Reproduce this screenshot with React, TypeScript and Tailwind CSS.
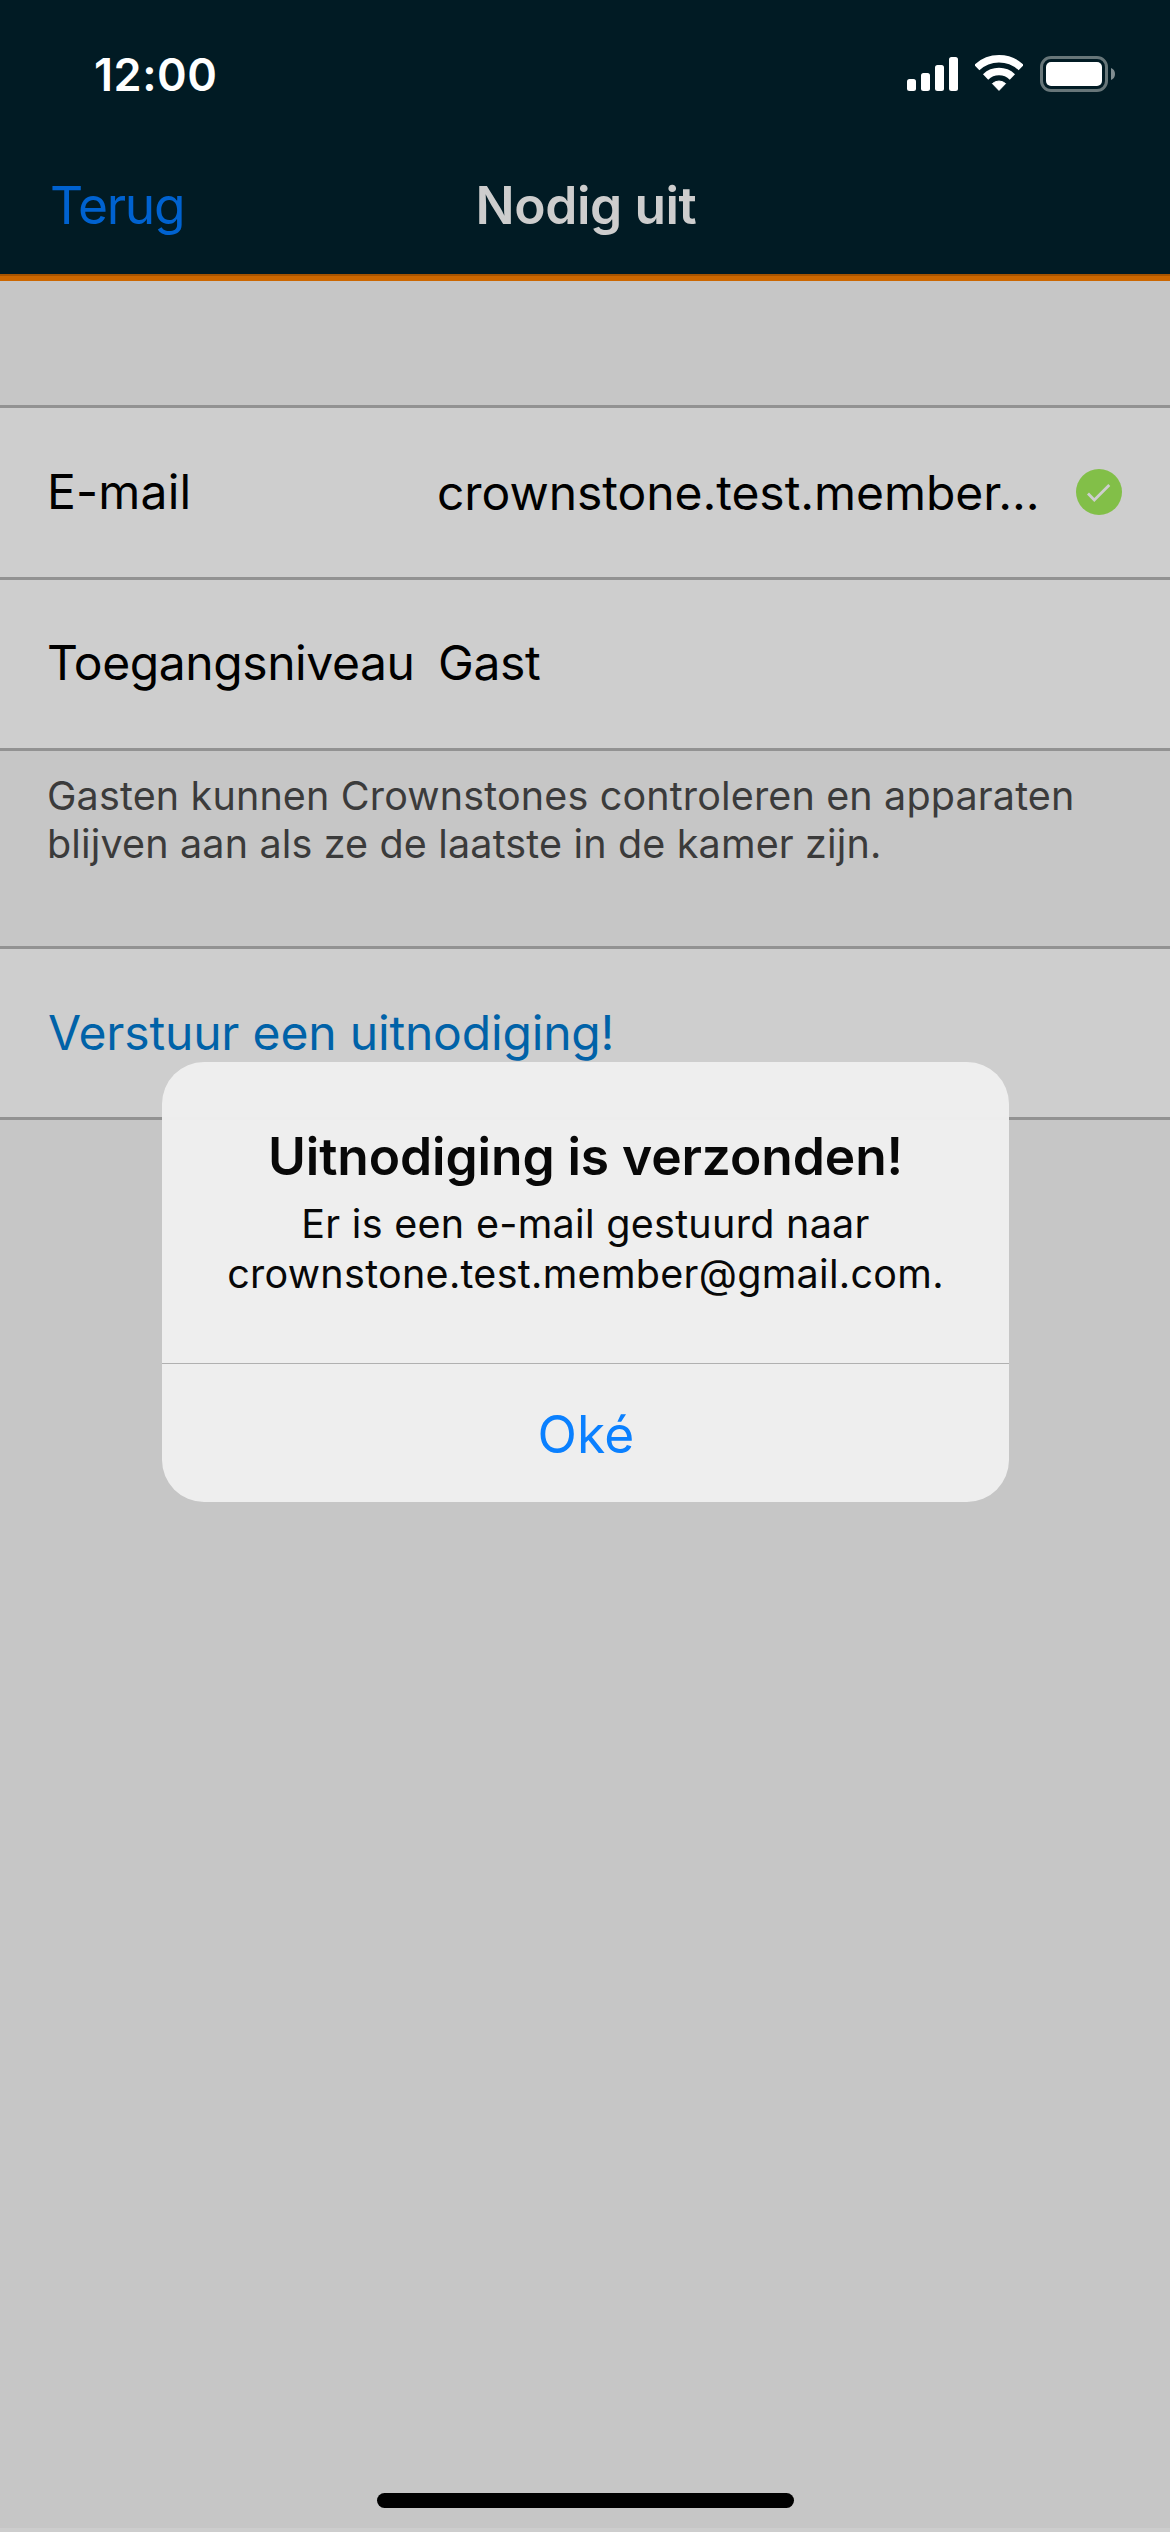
import React from "react";

function SignalIcon() {
  return (
    <svg width="51" height="36" viewBox="0 0 51 36" fill="#fff">
      <rect x="0" y="24" width="9" height="12" rx="2.5" />
      <rect x="14" y="18" width="9" height="18" rx="2.5" />
      <rect x="28" y="10" width="9" height="26" rx="2.5" />
      <rect x="42" y="2" width="9" height="34" rx="2.5" />
    </svg>
  );
}

function WifiIcon() {
  return (
    <svg width="48" height="36" viewBox="0 0 48 36" fill="none" stroke="#fff">
      <path d="M1.8 12.6A32.3 32.3 0 0 1 46.2 12.6" strokeWidth="7.5" />
      <path d="M10.6 21.9A19.5 19.5 0 0 1 37.4 21.9" strokeWidth="7.6" />
      <path
        d="M24 35.4L17.4 28.6A9.8 9.8 0 0 1 30.6 28.6Z"
        fill="#fff"
        strokeWidth="1"
        strokeLinejoin="round"
      />
    </svg>
  );
}

function BatteryIcon() {
  return (
    <svg className="mt-px" width="75" height="36" viewBox="0 0 75 36" fill="none">
      <rect x="1.5" y="1.5" width="65" height="33" rx="9.5" stroke="#677679" strokeWidth="3" />
      <rect x="6" y="6" width="56" height="24" rx="5" fill="#fff" />
      <path d="M71 12C73.6 13 75 15.3 75 18S73.6 23 71 24Z" fill="#808d91" />
    </svg>
  );
}

function CheckBadge() {
  return (
    <svg width="46" height="46" viewBox="0 0 46 46" fill="none">
      <circle cx="23" cy="23" r="23" fill="#82bf48" />
      <path d="M12 24.6L18.3 31L33.3 16" stroke="#cecece" strokeWidth="2.8" />
    </svg>
  );
}

function Separator() {
  return <div className="h-[3px] shrink-0 bg-[#929292]" />;
}

export default function App() {
  return (
    <div className="relative flex h-[2532px] w-[1170px] flex-col overflow-hidden bg-[#c6c6c6] font-[Inter,sans-serif] text-black">
      <header className="flex h-[281px] shrink-0 flex-col border-b-[5px] border-[#cc6700] bg-[#011b24]">
        <div className="flex h-[149px] justify-between pr-[55px] pl-[94px]">
          <span className="self-center text-[45px] leading-none font-semibold tracking-[0.55px] text-white">
            12:00
          </span>
          <div className="flex items-start gap-[17px] pt-[55px]">
            <SignalIcon />
            <WifiIcon />
            <BatteryIcon />
          </div>
        </div>
        <div className="grid h-[114px] grid-cols-3 items-center text-[51.5px] leading-none whitespace-nowrap">
          <span className="pl-[50px] tracking-[-1.27px] text-[#0062d0]">Terug</span>
          <span className="pl-[2px] text-center font-semibold tracking-[-0.41px] text-[#cdcdcd]">
            Nodig uit
          </span>
        </div>
        <div className="mt-auto h-[2px] bg-[#a85400]" />
      </header>

      <main className="flex flex-col pt-[124px] text-[48px] leading-none whitespace-nowrap">
        <Separator />
        <div className="flex h-[169px] items-center bg-[#cecece] pr-12 pl-[47px]">
          <span className="w-[390px] pb-[2px] tracking-[0.19px]">E-mail</span>
          <span className="tracking-[-0.05px]">crownstone.test.member...</span>
          <span className="ml-auto pb-px">
            <CheckBadge />
          </span>
        </div>
        <Separator />
        <div className="flex h-[168px] items-center bg-[#cecece] pb-[2px] pl-[47px]">
          <span className="w-[391px] tracking-[-0.42px]">Toegangsniveau</span>
          <span className="tracking-[-0.37px]">Gast</span>
        </div>
        <Separator />
        <p className="h-[195px] pt-[22px] pl-[47px] text-[39.5px] leading-[47.5px] tracking-[0.15px] text-[#3b3b3b]">
          Gasten kunnen Crownstones controleren en apparaten
          <br />
          blijven aan als ze de laatste in de kamer zijn.
        </p>
        <Separator />
        <div className="flex h-[168px] items-center bg-[#cecece] pb-px pl-[48px] tracking-[-0.17px] text-[#0062a8]">
          Verstuur een uitnodiging!
        </div>
        <Separator />
      </main>

      <footer className="mt-auto flex flex-col items-center">
        <div className="h-[15px] w-[417px] rounded-full bg-black" />
        <div className="mt-5 h-1 w-full bg-[#cdcdcd]" />
      </footer>

      <div
        role="alertdialog"
        className="absolute top-[1062px] left-[162px] flex h-[440px] w-[847px] flex-col rounded-[42px] bg-[#efefef]/98 text-center whitespace-nowrap text-[#080808]"
      >
        <div className="h-[301px] pt-[64px]">
          <h2 className="text-[51.5px] leading-[60px] font-semibold tracking-[-0.08px]">
            Uitnodiging is verzonden!
          </h2>
          <p className="mt-[13px] text-[39.5px] leading-[50px] tracking-[0.29px]">
            Er is een e-mail gestuurd naar
            <br />
            crownstone.test.member@gmail.com.
          </p>
        </div>
        <div className="h-px bg-[#b0b0b0]" />
        <button className="flex flex-1 items-center justify-center pt-1 pl-px text-[51.5px] leading-none tracking-[0.11px] text-[#0a80ff]">
          Oké
        </button>
      </div>
    </div>
  );
}
